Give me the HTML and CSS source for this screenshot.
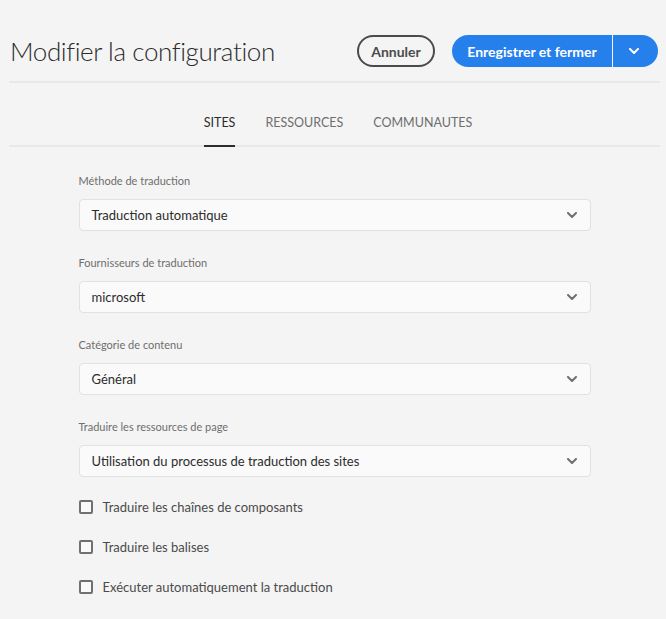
FILE: index.html
```html
<!DOCTYPE html>
<html lang="fr">
<head>
<meta charset="utf-8">
<title>Modifier la configuration</title>
<link rel="stylesheet" href="styles.css">
</head>
<body>
<div class="page">
  <header class="header">
    <h1 class="title">Modifier la configuration</h1>
    <div class="actions">
      <button class="btn btn-secondary">Annuler</button>
      <div class="split">
        <button class="btn btn-primary">Enregistrer et fermer</button>
        <button class="btn btn-primary btn-toggle" aria-label="Plus d'options">
          <svg width="10" height="6" viewBox="0 0 10 6"><path d="M1 1l4 4 4-4" fill="none" stroke="#fff" stroke-width="2" stroke-linecap="round" stroke-linejoin="round"/></svg>
        </button>
      </div>
    </div>
  </header>
  <nav class="tabs">
    <a class="tab tab-active">SITES</a>
    <a class="tab">RESSOURCES</a>
    <a class="tab">COMMUNAUTES</a>
  </nav>
  <form class="form">
    <div class="fields">
      <div class="field">
        <label class="label">Méthode de traduction</label>
        <div class="select"><span>Traduction automatique</span>
          <svg class="chev" width="10" height="6" viewBox="0 0 10 6"><path d="M1 1l4 4 4-4" fill="none" stroke="#6e6e6e" stroke-width="2" stroke-linecap="round" stroke-linejoin="round"/></svg>
        </div>
      </div>
      <div class="field">
        <label class="label">Fournisseurs de traduction</label>
        <div class="select"><span>microsoft</span>
          <svg class="chev" width="10" height="6" viewBox="0 0 10 6"><path d="M1 1l4 4 4-4" fill="none" stroke="#6e6e6e" stroke-width="2" stroke-linecap="round" stroke-linejoin="round"/></svg>
        </div>
      </div>
      <div class="field">
        <label class="label">Catégorie de contenu</label>
        <div class="select"><span>Général</span>
          <svg class="chev" width="10" height="6" viewBox="0 0 10 6"><path d="M1 1l4 4 4-4" fill="none" stroke="#6e6e6e" stroke-width="2" stroke-linecap="round" stroke-linejoin="round"/></svg>
        </div>
      </div>
      <div class="field">
        <label class="label">Traduire les ressources de page</label>
        <div class="select"><span>Utilisation du processus de traduction des sites</span>
          <svg class="chev" width="10" height="6" viewBox="0 0 10 6"><path d="M1 1l4 4 4-4" fill="none" stroke="#6e6e6e" stroke-width="2" stroke-linecap="round" stroke-linejoin="round"/></svg>
        </div>
      </div>
    </div>
    <div class="checks">
      <label class="check"><span class="box"></span>Traduire les chaînes de composants</label>
      <label class="check"><span class="box"></span>Traduire les balises</label>
      <label class="check"><span class="box"></span>Exécuter automatiquement la traduction</label>
    </div>
  </form>
</div>
</body>
</html>
```
FILE: styles.css
```css
* { box-sizing: border-box; }
html, body { margin: 0; background: #f4f4f4; }
body { font-family: Lato, "Open Sans", sans-serif; color: #2c2c2c; }
.page { padding: 0 6px 0 9px; }
.header {
  display: flex;
  align-items: center;
  justify-content: space-between;
  padding: 35px 2px 14px 1px;
  border-bottom: 2px solid #e8e8e8;
}
.title {
  margin: 0;
  font-weight: 300;
  font-size: 26px;
  line-height: 30px;
  color: #2c2c2c;
  letter-spacing: -0.4px;
}
.actions { display: flex; align-items: center; gap: 17px; }
.btn {
  font-family: inherit;
  font-weight: 700;
  font-size: 14px;
  height: 32px;
  border-radius: 16px;
  cursor: pointer;
}
.btn-secondary {
  background: transparent;
  border: 2px solid #4b4b4b;
  color: #4b4b4b;
  width: 78px;
  padding: 0;
}
.split { display: flex; gap: 1px; }
.btn-primary {
  background: #2680eb;
  color: #fff;
  border: none;
  width: 160px;
  border-radius: 16px 0 0 16px;
  padding: 0;
}
.btn-toggle {
  width: 45px;
  border-radius: 0 16px 16px 0;
  display: flex;
  align-items: center;
  justify-content: center;
  padding-right: 4px;
}
.tabs {
  display: flex;
  justify-content: center;
  gap: 30px;
  border-bottom: 2px solid #e8e8e8;
  height: 64px;
  padding-left: 7px;
}
.tab {
  font-size: 12.5px;
  color: #6e6e6e;
  display: flex;
  align-items: center;
  padding-top: 16px;
  margin-bottom: -2px;
  border-bottom: 2px solid transparent;
}
.tab-active {
  color: #2c2c2c;
  border-bottom-color: #2c2c2c;
}
.form {
  width: 512px;
  margin: 0 auto;
  padding-top: 26px;
}
.fields { display: flex; flex-direction: column; gap: 24px; }
.label {
  display: block;
  font-size: 11px;
  line-height: 16px;
  color: #6e6e6e;
  margin-bottom: 10px;
}
.select {
  height: 32px;
  background: #fafafa;
  border: 1px solid #e1e1e1;
  border-radius: 4px;
  display: flex;
  align-items: center;
  justify-content: space-between;
  padding: 0 13px 0 12px;
  font-size: 13px;
  color: #2c2c2c;
}
.chev { display: block; }
.checks {
  display: flex;
  flex-direction: column;
  gap: 18px;
  margin-top: 19px;
}
.check {
  display: flex;
  align-items: center;
  gap: 10px;
  font-size: 13px;
  line-height: 22px;
  color: #4b4b4b;
}
.box {
  width: 14px;
  height: 14px;
  border: 2px solid #707070;
  border-radius: 2px;
  background: #fafafa;
}
```
